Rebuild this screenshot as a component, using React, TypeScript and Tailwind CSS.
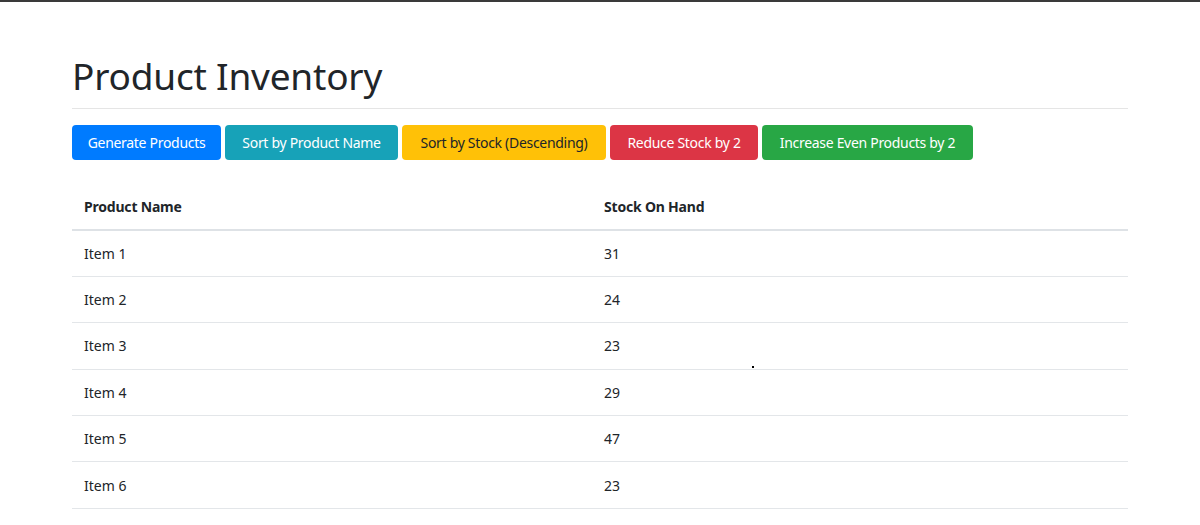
const products = [
  { name: "Item 1", stock: 31 },
  { name: "Item 2", stock: 24 },
  { name: "Item 3", stock: 23 },
  { name: "Item 4", stock: 29 },
  { name: "Item 5", stock: 47 },
  { name: "Item 6", stock: 23 },
];

const buttons = [
  { label: "Generate Products", cls: "bg-[#007bff] text-white w-[149px]" },
  { label: "Sort by Product Name", cls: "bg-[#17a2b8] text-white w-[173px]" },
  { label: "Sort by Stock (Descending)", cls: "bg-[#ffc107] text-[#212529] w-[204px]" },
  { label: "Reduce Stock by 2", cls: "bg-[#dc3545] text-white w-[148px]" },
  { label: "Increase Even Products by 2", cls: "bg-[#28a745] text-white w-[211px]" },
];

export default function App() {
  return (
    <div className="relative min-h-[525px] bg-white text-[#212529] font-['Noto_Sans',sans-serif]">
      <div className="h-[2px] bg-[#3a3a3a]" />
      <div className="mx-[72px] pt-[50px]">
        <h1 className="text-[37px] leading-[48px] pb-[8px] border-b border-[#e5e5e5] tracking-[-0.2px]">Product Inventory</h1>
        <div className="flex gap-[4px] mt-[16px]">
          {buttons.map((b) => (
            <button
              key={b.label}
              className={`h-[35px] rounded-[4px] text-[14px] tracking-[-0.3px] ${b.cls}`}
            >
              {b.label}
            </button>
          ))}
        </div>
        <table className="w-full mt-[24px] text-[14px]">
          <thead>
            <tr className="border-b-2 border-[#dee2e6]">
              <th className="w-[520px] h-[46px] px-[12px] text-left font-bold tracking-[-0.2px]">Product Name</th>
              <th className="h-[46px] px-[12px] text-left font-bold tracking-[-0.2px]">Stock On Hand</th>
            </tr>
          </thead>
          <tbody>
            {products.map((p) => (
              <tr key={p.name} className="border-b border-[#e3e6e9]">
                <td className="h-[46.4px] px-[12px]">{p.name}</td>
                <td className="h-[46.4px] px-[12px]">{p.stock}</td>
              </tr>
            ))}
          </tbody>
        </table>
      </div>
      <div className="absolute left-[752px] top-[366px] w-[2px] h-[2px] bg-black" />
    </div>
  );
}
